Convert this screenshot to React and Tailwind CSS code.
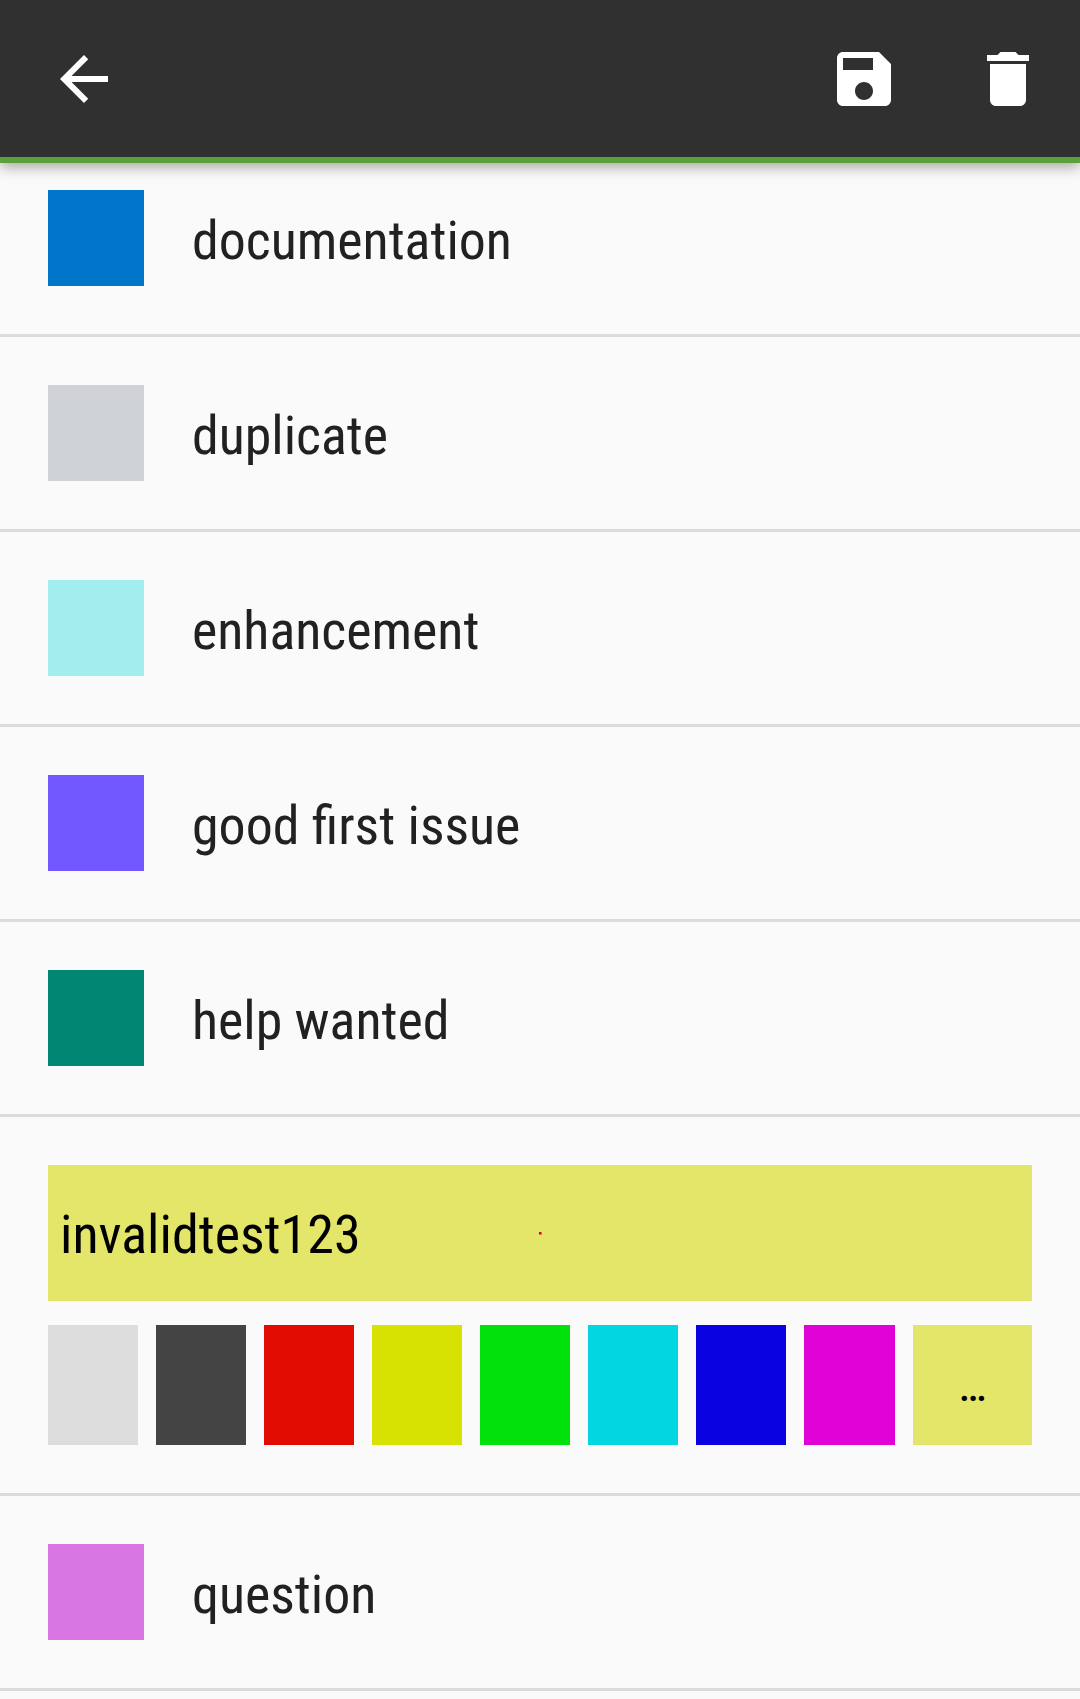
const labels = [
  ["documentation", "bg-[#0075ca]"],
  ["duplicate", "bg-[#cfd3d7]"],
  ["enhancement", "bg-[#a2eeef]"],
  ["good first issue", "bg-[#7057ff]"],
  ["help wanted", "bg-[#008672]"],
];

const swatches = [
  "w-[90px] bg-[#dddddd]",
  "w-[90px] bg-[#444444]",
  "w-[90px] bg-[#e10c02]",
  "w-[90px] bg-[#d7e102]",
  "w-[90px] bg-[#02e10c]",
  "w-[90px] bg-[#02d7e1]",
  "w-[90px] bg-[#0b02e1]",
  "w-[91px] bg-[#e102d8]",
];

function Icon({ d }) {
  return (
    <svg viewBox="0 0 24 24" className="size-[72px] fill-white">
      <path d={d} />
    </svg>
  );
}

function Row({ name, color }) {
  return (
    <li className="flex h-[195px] items-center gap-12 border-b-[3px] border-[#dbdbdb] px-12">
      <div className={`size-24 ${color}`} />
      <span className="whitespace-nowrap pt-1.5 text-[53.9px] leading-[64px] text-[#212121]">{name}</span>
    </li>
  );
}

function LabelEditor() {
  return (
    <li className="flex h-[379px] flex-col gap-6 border-b-[3px] border-[#dbdbdb] px-12 pt-12">
      <div className="relative flex h-[136px] items-center bg-[#e4e669] px-3">
        <span className="pt-[3px] text-[54px] leading-[64px] text-black">invalidtest123</span>
        <span className="absolute left-[491px] top-[67px] size-[3px] border-b border-r border-[#ee6a4c] bg-[#d50025]" />
      </div>
      <div className="flex h-[120px] gap-[18px]">
        {swatches.map((c) => (
          <button key={c} className={c} />
        ))}
        <button className="flex flex-1 items-center justify-center bg-[#e4e669] text-[48px] leading-[56px] text-black">
          …
        </button>
      </div>
    </li>
  );
}

export default function App() {
  return (
    <div className="flex h-[1699px] w-[1080px] flex-col overflow-hidden bg-[#fafafa] font-['Roboto_Condensed','Roboto',sans-serif]">
      <header className="z-10 flex h-[163px] shrink-0 items-center justify-between border-b-[6px] border-[#5ba03c] bg-[#303030] pl-12 pr-9 pt-px shadow-[0_5px_12px_rgba(0,0,0,0.3)]">
        <Icon d="M20 11H7.83l5.59-5.59L12 4l-8 8 8 8 1.41-1.41L7.83 13H20v-2z" />
        <div className="flex gap-[72px]">
          <Icon d="M17 3H5c-1.11 0-2 .9-2 2v14c0 1.1.89 2 2 2h14c1.1 0 2-.9 2-2V7l-4-4zm-5 16c-1.66 0-3-1.34-3-3s1.34-3 3-3 3 1.34 3 3-1.34 3-3 3zm3-10H5V5h10v4z" />
          <Icon d="M6 19c0 1.1.9 2 2 2h8c1.1 0 2-.9 2-2V7H6v12zM19 4h-3.5l-1-1h-5l-1 1H5v2h14V4z" />
        </div>
      </header>
      <ul className="-mt-[21px]">
        {labels.map(([name, color]) => (
          <Row key={name} name={name} color={color} />
        ))}
        <LabelEditor />
        <Row name="question" color="bg-[#d876e3]" />
      </ul>
    </div>
  );
}
